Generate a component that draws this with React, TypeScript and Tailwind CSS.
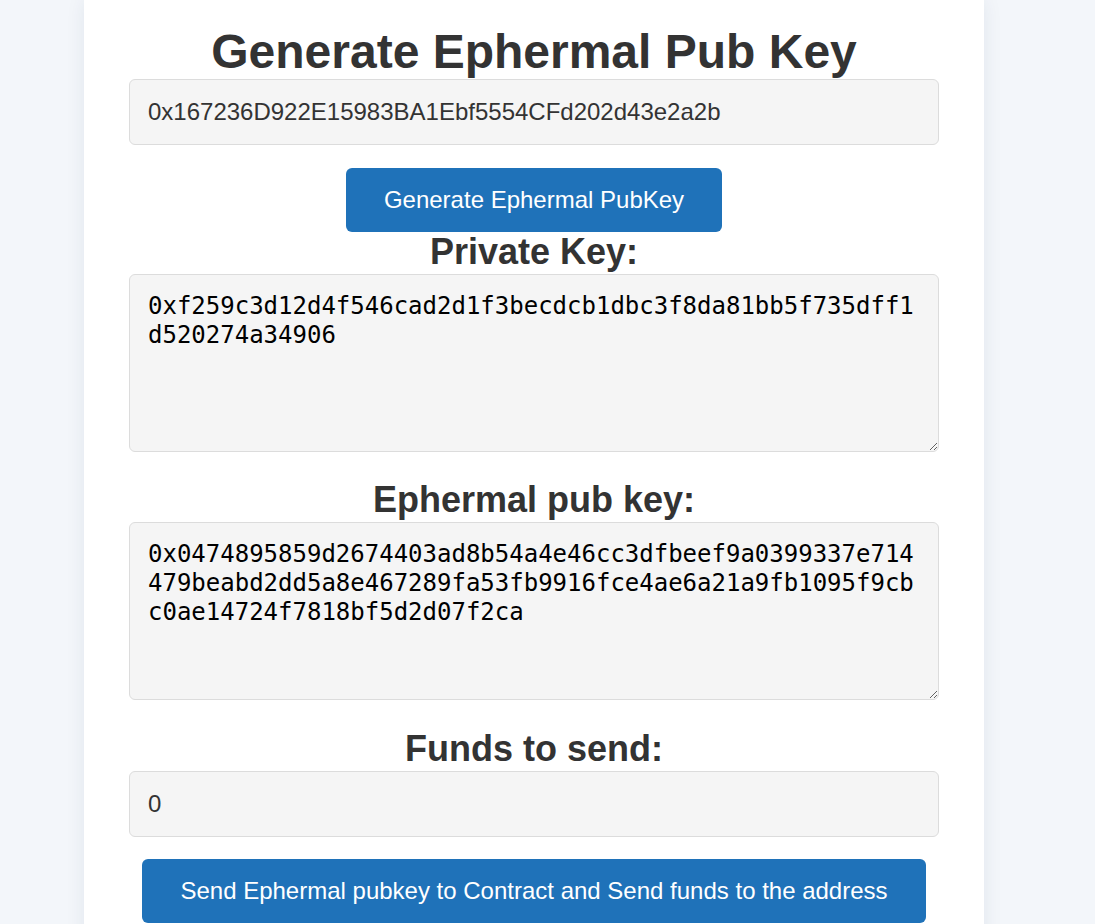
const privateKey = '0xf259c3d12d4f546cad2d1f3becdcb1dbc3f8da81bb5f735dff1d520274a34906'
const pubKey =
  '0x0474895859d2674403ad8b54a4e46cc3dfbeef9a0399337e714479beabd2dd5a8e467289fa53fb9916fce4ae6a21a9fb1095f9cbc0ae14724f7818bf5d2d07f2ca'

const heading = "mb-[4px] text-[36px] font-bold leading-[36px] text-[#333]"
const field =
  "block w-full rounded-[6px] border border-[#dcdcdc] bg-[#f5f5f5] px-[18px] py-[18px] text-[24px] leading-[28px] text-[#333] outline-none"
const area =
  "block h-[178px] w-full rounded-[6px] border border-[#dcdcdc] bg-[#f5f5f5] px-[18px] py-[17px] text-[24px] leading-[29px] text-black outline-none"
const button =
  "rounded-[6px] bg-[#1f72b9] px-[38px] py-[18px] text-[24px] leading-[28px] text-white"

export default function App() {
  return (
    <div className="min-h-screen bg-[#f3f6fa] font-['Liberation_Sans',Arial,sans-serif]">
      <div className="ml-[84px] flex min-h-screen w-[900px] flex-col items-center bg-white px-[45px] pt-[24px] pb-10 shadow-[0_0_18px_rgba(30,50,90,0.08)]">
        <h1 className="text-[48px] font-bold leading-[55px] text-[#333]">Generate Ephermal Pub Key</h1>
        <input className={field} readOnly value="0x167236D922E15983BA1Ebf5554CFd202d43e2a2b" />

        <button className={`${button} mt-[23px]`}>Generate Ephermal PubKey</button>

        <h2 className={`${heading} mt-[2px]`}>Private Key:</h2>
        <textarea
          className={`${area} font-['DejaVu_Sans_Mono',monospace]`}
          readOnly
          value={privateKey}
        />

        <h2 className={`${heading} mt-[30px]`}>Ephermal pub key:</h2>
        <textarea
          className={`${area} font-['DejaVu_Sans_Mono',monospace]`}
          readOnly
          value={pubKey}
        />

        <h2 className={`${heading} mt-[31px]`}>Funds to send:</h2>
        <input className={field} readOnly value="0" />

        <button className={`${button} mt-[22px]`}>
          Send Ephermal pubkey to Contract and Send funds to the address
        </button>
      </div>
    </div>
  )
}
